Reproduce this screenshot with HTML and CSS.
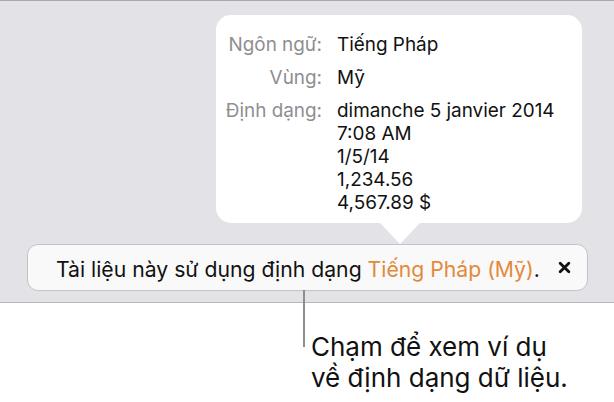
FILE: index.html
```html
<!DOCTYPE html>
<html lang="vi">
<head>
    <meta charset="UTF-8">
    <meta name="viewport" content="width=device-width, initial-scale=1.0">
    <title>Định dạng tài liệu</title>
    <link rel="stylesheet" href="styles.css">
</head>
<body>
    <section class="stage">
        <div class="popover">
            <div class="info-grid">
                <span class="info-label">Ngôn ngữ:</span>
                <span class="info-value">Tiếng Pháp</span>

                <span class="info-label">Vùng:</span>
                <span class="info-value">Mỹ</span>

                <span class="info-label">Định dạng:</span>
                <span class="info-value">
                    dimanche 5 janvier 2014<br>
                    7:08 AM<br>
                    1/5/14<br>
                    1,234.56<br>
                    4,567.89 $
                </span>
            </div>
        </div>

        <div class="banner">
            <p class="banner-text">Tài liệu này sử dụng định dạng <span class="banner-link">Tiếng Pháp (Mỹ)</span>.</p>
            <button class="banner-close" aria-label="Đóng">
                <svg viewBox="0 0 12 12" xmlns="http://www.w3.org/2000/svg">
                    <path d="M2 2 L10 10 M10 2 L2 10"/>
                </svg>
            </button>
        </div>
    </section>

    <p class="callout">Chạm để xem ví dụ<br>về định dạng dữ liệu.</p>
</body>
</html>
```

FILE: styles.css
```css
body {
    font-family: Inter, Roboto, "Liberation Sans", sans-serif;
    margin: 0;
    padding: 0;
    background-color: #fff;
    color: #111;
}

.stage {
    display: flex;
    flex-direction: column;
    align-items: flex-start;
    background-color: #e3e3e7;
    border-top: 1px solid #aaaaae;
    border-bottom: 1px solid #b6b6ba;
    padding: 14px 0 11px 27px;
}

.popover {
    position: relative;
    width: 366px;
    margin-left: 189px;
    margin-bottom: 21px;
    padding: 18px 0 9px 0;
    background-color: #fff;
    border-radius: 15px;
    box-sizing: border-box;
}

/* the little arrow under the popover */
.popover::after {
    content: "";
    position: absolute;
    left: 164px;
    bottom: -21px;
    border-left: 20px solid transparent;
    border-right: 20px solid transparent;
    border-top: 21px solid #fff;
}

.info-grid {
    display: grid;
    grid-template-columns: 106px 1fr;
    column-gap: 15px;
    row-gap: 10px;
    font-size: 18.9px;
    line-height: 23px;
}

.info-label {
    text-align: right;
    color: #8e8e92;
}

.info-value {
    color: #111;
}

.banner {
    position: relative;
    display: flex;
    align-items: center;
    justify-content: space-between;
    width: 561px;
    height: 47px;
    box-sizing: border-box;
    padding: 3px 16px 0 28px;
    background-color: #f9f9f9;
    border: 1px solid #c4c4c8;
    border-radius: 11px;
}

/* leader line down to the callout */
.banner::after {
    content: "";
    position: absolute;
    left: 275px;
    top: 100%;
    width: 2px;
    height: 57px;
    background-color: #8e8e8e;
}

.banner-text {
    margin: 0;
    font-size: 21.2px;
    color: #111;
}

.banner-link {
    color: #e28a3a;
}

.banner-close {
    display: flex;
    background: none;
    border: none;
    padding: 0;
    margin-bottom: 3px;
    cursor: pointer;
}

.banner-close svg {
    width: 13px;
    height: 13px;
    stroke: #111;
    stroke-width: 2.6;
    stroke-linecap: round;
}

.callout {
    margin: 28px 0 0 311px;
    font-size: 26px;
    line-height: 31px;
    color: #111;
}
```
